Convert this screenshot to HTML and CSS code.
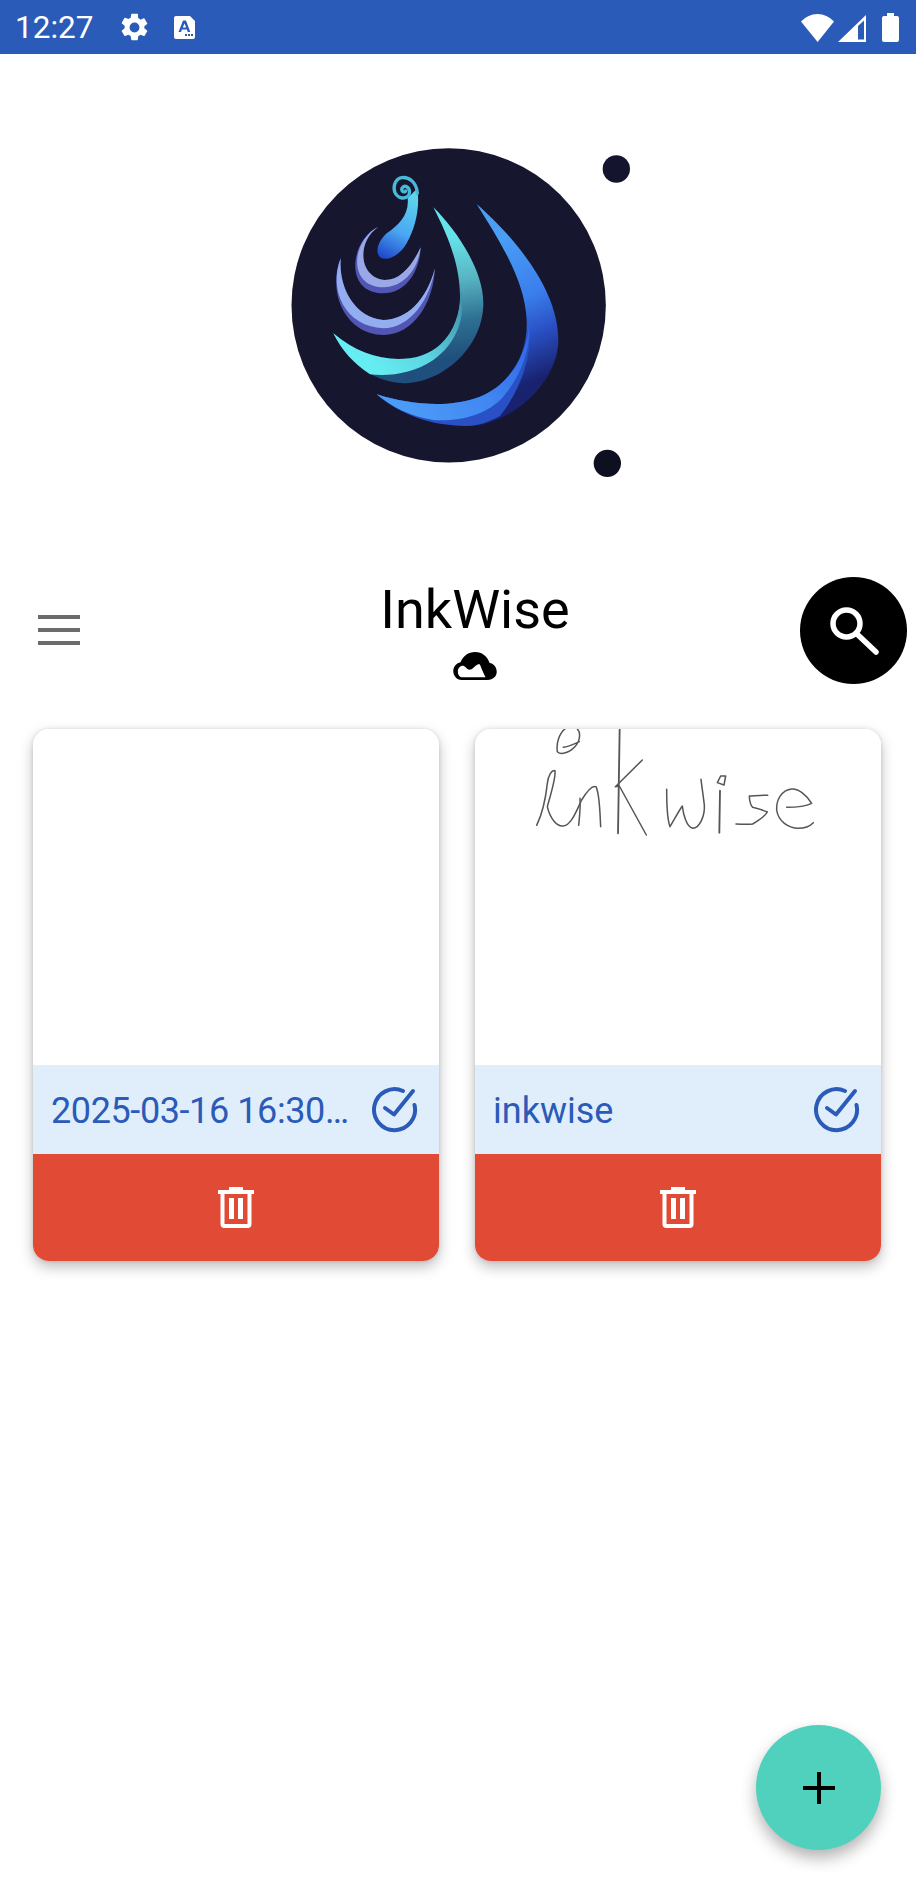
FILE: index.html
```html
<!DOCTYPE html>
<html lang="en">
<head>
    <meta charset="UTF-8">
    <meta name="viewport" content="width=device-width, initial-scale=1.0">
    <title>InkWise</title>
    <link rel="stylesheet" href="styles.css">
</head>
<body>
    <div class="phone">
        <!-- status bar -->
        <div class="statusBar">
            <span class="clock">12:27</span>
            <svg class="gear" viewBox="0 0 24 24"><path fill="#fff" d="M19.14 12.94c.04-.3.06-.61.06-.94s-.02-.64-.07-.94l2.03-1.58a.49.49 0 0 0 .12-.61l-1.92-3.32a.49.49 0 0 0-.59-.22l-2.39.96a7 7 0 0 0-1.62-.94l-.36-2.54A.48.48 0 0 0 13.92 2h-3.84a.47.47 0 0 0-.47.41l-.36 2.54a7.2 7.2 0 0 0-1.62.94l-2.39-.96a.48.48 0 0 0-.59.22L2.73 8.47a.47.47 0 0 0 .12.61l2.03 1.58c-.05.3-.08.63-.08.94s.02.64.07.94l-2.03 1.58a.49.49 0 0 0-.12.61l1.92 3.32c.12.22.37.29.59.22l2.39-.96c.5.38 1.03.7 1.62.94l.36 2.54c.05.24.24.41.48.41h3.84c.24 0 .44-.17.47-.41l.36-2.54a7 7 0 0 0 1.62-.94l2.39.96c.22.08.47 0 .59-.22l1.92-3.32a.47.47 0 0 0-.12-.61l-2.01-1.58zM12 15.6a3.6 3.6 0 1 1 0-7.2 3.6 3.6 0 0 1 0 7.2z"/></svg>
            <svg class="simIcon" viewBox="0 0 21 23"><path fill="#fff" fill-rule="evenodd" d="M2 0h14l5 5v16a2 2 0 0 1-2 2H2a2 2 0 0 1-2-2V2a2 2 0 0 1 2-2zM9 4.500L4.500 16h2.600l.8-2.400h5l.8 2.400h2.600L12 4.500H9zm1.500 3L12.200 11.500H8.800L10.500 7.500zM11 18v2h2v-2h-2zm3 0v2h2v-2h-2zm3 0v2h2v-2h-2z"/></svg>
            <div class="statusRight">
                <svg class="wifi" viewBox="0 0 33 28"><path fill="#fff" d="M16.600 28L0 7.600Q7 0 16.500 0T33 7.600z"/></svg>
                <svg class="signal" viewBox="0 0 28 27"><path fill="#fff" fill-rule="evenodd" d="M28 0v27H0zM20 11v13.500h6V5.500z"/></svg>
                <svg class="battery" viewBox="0 0 17 29"><path fill="#fff" d="M5 0h7v3h3a2 2 0 0 1 2 2v22a2 2 0 0 1-2 2H2a2 2 0 0 1-2-2V5a2 2 0 0 1 2-2h3z"/></svg>
            </div>
        </div>

        <!-- logo -->
        <div class="logoArea">
            <svg class="logo" viewBox="0 0 1110 1080">
                <defs>
                    <linearGradient id="bigBody" gradientUnits="userSpaceOnUse" x1="690" y1="320" x2="870" y2="720">
                        <stop offset="0" stop-color="#4a9ff5"/>
                        <stop offset="0.45" stop-color="#3a7eec"/>
                        <stop offset="0.7" stop-color="#2a50c4"/>
                        <stop offset="1" stop-color="#18226f"/>
                    </linearGradient>
                    <linearGradient id="bigBand" gradientUnits="userSpaceOnUse" x1="400" y1="830" x2="790" y2="620">
                        <stop offset="0" stop-color="#4b9cf7"/>
                        <stop offset="0.5" stop-color="#4288f3"/>
                        <stop offset="1" stop-color="#2f66e6"/>
                    </linearGradient>
                    <linearGradient id="tealBody" gradientUnits="userSpaceOnUse" x1="540" y1="320" x2="590" y2="680">
                        <stop offset="0" stop-color="#66e3ea"/>
                        <stop offset="0.35" stop-color="#58b6c4"/>
                        <stop offset="0.7" stop-color="#2e6f92"/>
                        <stop offset="1" stop-color="#1f4f7c"/>
                    </linearGradient>
                    <linearGradient id="tealBand" gradientUnits="userSpaceOnUse" x1="300" y1="700" x2="590" y2="520">
                        <stop offset="0" stop-color="#66edf2"/>
                        <stop offset="0.45" stop-color="#5cd6e2"/>
                        <stop offset="1" stop-color="#3f8fad"/>
                    </linearGradient>
                    <linearGradient id="drop" gradientUnits="userSpaceOnUse" x1="435" y1="200" x2="340" y2="385">
                        <stop offset="0" stop-color="#5fd5ec"/>
                        <stop offset="0.55" stop-color="#4aa8f3"/>
                        <stop offset="1" stop-color="#1f47c9"/>
                    </linearGradient>
                </defs>
                <circle cx="536" cy="526" r="471.500" fill="#16162f"/>
                <circle cx="1039" cy="117" r="41" fill="#14142e"/>
                <circle cx="1012" cy="1000" r="41" fill="#0f0f22"/>

                <!-- big wave -->
                <path fill="url(#bigBody)" d="M620 222C720 310 865 470 865 630C865 760 720 888 590 888C480 888 385 850 320 793C420 825 540 835 630 800C720 765 775 670 770 570C765 450 690 335 620 222z"/>
                <path fill="#2a50c6" d="M320 793C420 825 540 835 630 800C720 765 775 670 778 570C790 660 760 770 690 858C655 878 620 888 590 888C480 888 385 850 320 793z"/>
                <path fill="url(#bigBand)" d="M320 793C420 825 540 835 630 800C720 765 775 670 778 570C785 640 760 730 700 800C650 855 570 875 490 870C420 860 365 830 320 793z"/>
                <!-- teal wave -->
                <path fill="url(#tealBody)" d="M490 232C560 300 640 420 640 520C640 650 520 760 400 760C300 755 230 690 190 610C260 670 340 695 420 685C520 670 570 590 570 500C570 400 530 310 490 232z"/>
                <path fill="url(#tealBand)" d="M190 610C260 670 340 695 420 685C520 670 572 590 572 480C590 560 560 640 490 690C430 730 360 740 300 733C250 700 215 660 190 610z"/>
                <!-- lilac arcs -->
                <path fill="#5155b4" d="M212 385C170 490 230 615 340 615C430 615 490 520 495 415C470 510 410 570 340 570C260 565 205 480 212 385z"/>
                <path fill="#93aef0" d="M212 385C175 480 225 590 340 595C420 595 480 510 495 415C470 510 410 570 340 570C260 565 205 480 212 385z"/>
                <path fill="#5155b4" d="M325 290C240 330 220 490 340 490C410 490 450 420 452 352C425 410 390 450 345 450C270 445 255 340 325 290z"/>
                <path fill="#9aa8e8" d="M325 290C245 330 230 470 340 472C405 470 445 415 452 352C425 410 390 450 345 450C270 445 255 340 325 290z"/>
                <!-- drop with curl -->
                <path fill="url(#drop)" d="M442 175C450 230 438 290 410 340C392 372 360 392 335 385C315 375 318 340 350 310C385 285 418 255 413 205z"/>
                <path fill="none" stroke="#4ab8d8" stroke-width="10" stroke-linecap="round" d="M442 190C440 155 415 140 395 143C375 147 368 170 375 188C382 203 400 208 412 200C422 192 420 175 410 170C400 166 392 175 397 183C400 187 405 186 407 183"/>
            </svg>
        </div>

        <!-- toolbar -->
        <div class="toolbar">
            <div class="menuIcon"><span></span><span></span><span></span></div>
            <div class="titleBlock">
                <h1>InkWise</h1>
                <svg class="cloud" viewBox="0 0 132 85"><path fill-rule="evenodd" d="M66 0C88 0 105 15 110 33C122 35 132 46 132 60C132 74 120 85 105 85H25C11 85 0 73 0 58C0 44 10 33 22 31C30 12 46 0 66 0zM14 60C14 70 20 77 28 77H98C92 66 86 50 81 38C78 36 72 38 68 42C62 46 58 54 50 54C42 54 38 44 30 42C22 42 14 48 14 60z"/></svg>
            </div>
            <div class="searchBtn">
                <svg viewBox="0 0 64 64"><circle cx="24.500" cy="24.500" r="13.500" fill="none" stroke="#fff" stroke-width="5.500"/><path d="M36 36l18 17" stroke="#fff" stroke-width="5.500" stroke-linecap="round"/></svg>
            </div>
        </div>

        <!-- note cards -->
        <div class="grid">
            <div class="card">
                <div class="preview"></div>
                <div class="noteInfo">
                    <span class="noteName dateName">2025-03-16 16:30…</span>
                    <svg class="checkIcon" viewBox="0 0 46 46"><path fill="none" stroke="#2b5bb8" stroke-width="4" stroke-linecap="round" d="M42.500 18A20.500 20.500 0 1 1 31 4"/><path fill="none" stroke="#2b5bb8" stroke-width="4" stroke-linecap="round" stroke-linejoin="round" d="M13 21l9 6.500L41 4"/></svg>
                </div>
                <div class="deleteBar">
                    <svg class="trash" viewBox="0 0 36 41"><path fill="#fff" fill-rule="evenodd" d="M11 0h14v3h11v4h-2.500v30a4 4 0 0 1-4 4h-23a4 4 0 0 1-4-4V7H0V3h11zM6.500 7v30h23V7zM11 11h5v21h-5zM20 11h5v21h-5z"/></svg>
                </div>
            </div>
            <div class="card">
                <div class="preview">
                    <svg class="sketch" viewBox="15 27 1218 1008"><g fill="none" stroke="#555" stroke-width="4.500" stroke-linecap="round" stroke-linejoin="round">
                        <path d="M285 27C268 40 258 70 262 95C275 108 310 95 325 65C332 45 328 33 322 27M280 82C295 80 312 72 328 65"/>
                        <path d="M200 316C215 285 225 255 232 190C235 165 245 150 255 152C258 175 240 230 232 260C240 295 260 320 280 318C305 315 320 270 335 240C350 215 365 195 378 200C390 225 390 290 392 320"/>
                        <path d="M330 235C332 265 328 295 326 316"/>
                        <path d="M449 27L444 340" stroke-width="5.500"/>
                        <path d="M517 120L436 200L448 198L529 345"/>
                        <path d="M590 208C590 250 592 300 600 320C612 300 625 275 637 258C640 285 650 320 668 325C690 325 705 285 703 255C700 230 695 195 693 178"/>
                        <path d="M742 188L752 168L767 168L762 195z"/>
                        <path d="M750 212L748 338" stroke-width="5.500"/>
                        <path d="M893 226C875 224 850 228 838 228C838 240 842 258 848 262C860 265 880 270 892 276C885 290 860 305 848 312C830 314 815 312 798 312"/>
                        <path d="M950 262C975 262 1005 260 1025 250C1010 225 985 205 965 207C935 210 918 240 920 270C925 305 955 323 985 325C1005 325 1020 318 1030 308"/>
                    </g></svg>
                </div>
                <div class="noteInfo">
                    <span class="noteName">inkwise</span>
                    <svg class="checkIcon" viewBox="0 0 46 46"><path fill="none" stroke="#2b5bb8" stroke-width="4" stroke-linecap="round" d="M42.500 18A20.500 20.500 0 1 1 31 4"/><path fill="none" stroke="#2b5bb8" stroke-width="4" stroke-linecap="round" stroke-linejoin="round" d="M13 21l9 6.500L41 4"/></svg>
                </div>
                <div class="deleteBar">
                    <svg class="trash" viewBox="0 0 36 41"><path fill="#fff" fill-rule="evenodd" d="M11 0h14v3h11v4h-2.500v30a4 4 0 0 1-4 4h-23a4 4 0 0 1-4-4V7H0V3h11zM6.500 7v30h23V7zM11 11h5v21h-5zM20 11h5v21h-5z"/></svg>
                </div>
            </div>
        </div>

        <div class="fab">
            <svg viewBox="0 0 32 32"><path d="M14 0h4v14h14v4H18v14h-4V18H0v-4h14z"/></svg>
        </div>
    </div>
</body>
</html>
```

FILE: styles.css
```css
* {
    box-sizing: border-box;
}

body {
    margin: 0;
    background-color: #fff;
    font-family: 'Roboto', 'Liberation Sans', sans-serif;
}

.phone {
    position: relative;
    width: 916px;
    height: 1886px;
    overflow: hidden;
    background-color: #fff;
}

.statusBar {
    display: flex;
    align-items: center;
    height: 54px;
    padding: 0 17px 0 15px;
    background-color: #2b5bb8;
    color: #fff;
}

.clock {
    font-size: 31.5px;
    width: 79px;
}

.gear {
    width: 33px;
    height: 33px;
    margin-left: 24px;
}

.simIcon {
    width: 21px;
    height: 23px;
    margin-left: 23px;
}

.statusRight {
    display: flex;
    align-items: flex-end;
    margin-left: auto;
}

.wifi {
    width: 33px;
    height: 28px;
}

.signal {
    width: 28px;
    height: 27px;
    margin-left: 4px;
}

.battery {
    width: 17px;
    height: 29px;
    margin-left: 16px;
}

.logoArea {
    height: 506px;
    padding: 76px 0 0 270px;
}

.logo {
    display: block;
    width: 370px;
    height: 360px;
}

.toolbar {
    display: flex;
    align-items: flex-start;
    height: 169px;
}

.menuIcon {
    display: flex;
    flex-direction: column;
    gap: 9px;
    width: 42px;
    margin: 55px 0 0 38px;
}

.menuIcon span {
    display: block;
    height: 4px;
    background-color: #6b6b6b;
}

.titleBlock {
    display: flex;
    flex-direction: column;
    align-items: center;
    width: 300px;
    margin: 16px 0 0 245px;
}

.titleBlock h1 {
    margin: 0;
    font-size: 54px;
    font-weight: 400;
    line-height: 68px;
    color: #000;
}

.cloud {
    width: 44px;
    height: 28px;
    margin-top: 8px;
}

.searchBtn {
    display: flex;
    align-items: center;
    justify-content: center;
    width: 107px;
    height: 107px;
    margin: 17px 0 0 175px;
    border-radius: 50%;
    background-color: #000;
}

.searchBtn svg {
    width: 64px;
    height: 64px;
}

.grid {
    display: grid;
    grid-template-columns: 406px 406px;
    gap: 36px;
    padding: 0 33px;
}

.card {
    height: 532px;
    border-radius: 16px;
    overflow: hidden;
    background-color: #fff;
    box-shadow: 0 6px 14px rgba(0, 0, 0, 0.25), 0 0 4px rgba(0, 0, 0, 0.12);
}

.preview {
    height: 336px;
    background-color: #fff;
}

.sketch {
    display: block;
    width: 406px;
    height: 336px;
}

.noteInfo {
    display: flex;
    align-items: center;
    height: 89px;
    padding: 0 21px 0 18px;
    background-color: #e0eefc;
}

.noteName {
    flex: 1;
    min-width: 0;
    padding-top: 3px;
    white-space: nowrap;
    font-size: 36px;
    color: #2b5bb8;
    margin-right: 20px;
}

.dateName {
    letter-spacing: -0.4px;
}

.checkIcon {
    flex: none;
    width: 46px;
    height: 46px;
}

.deleteBar {
    display: flex;
    align-items: center;
    justify-content: center;
    height: 107px;
    background-color: #e14b36;
}

.trash {
    width: 36px;
    height: 41px;
}

.fab {
    position: absolute;
    left: 756px;
    top: 1725px;
    display: flex;
    align-items: center;
    justify-content: center;
    width: 125px;
    height: 125px;
    border-radius: 50%;
    background-color: #4fd1bd;
    box-shadow: 0 8px 16px rgba(0, 0, 0, 0.3);
}

.fab svg {
    width: 32px;
    height: 32px;
}
```
